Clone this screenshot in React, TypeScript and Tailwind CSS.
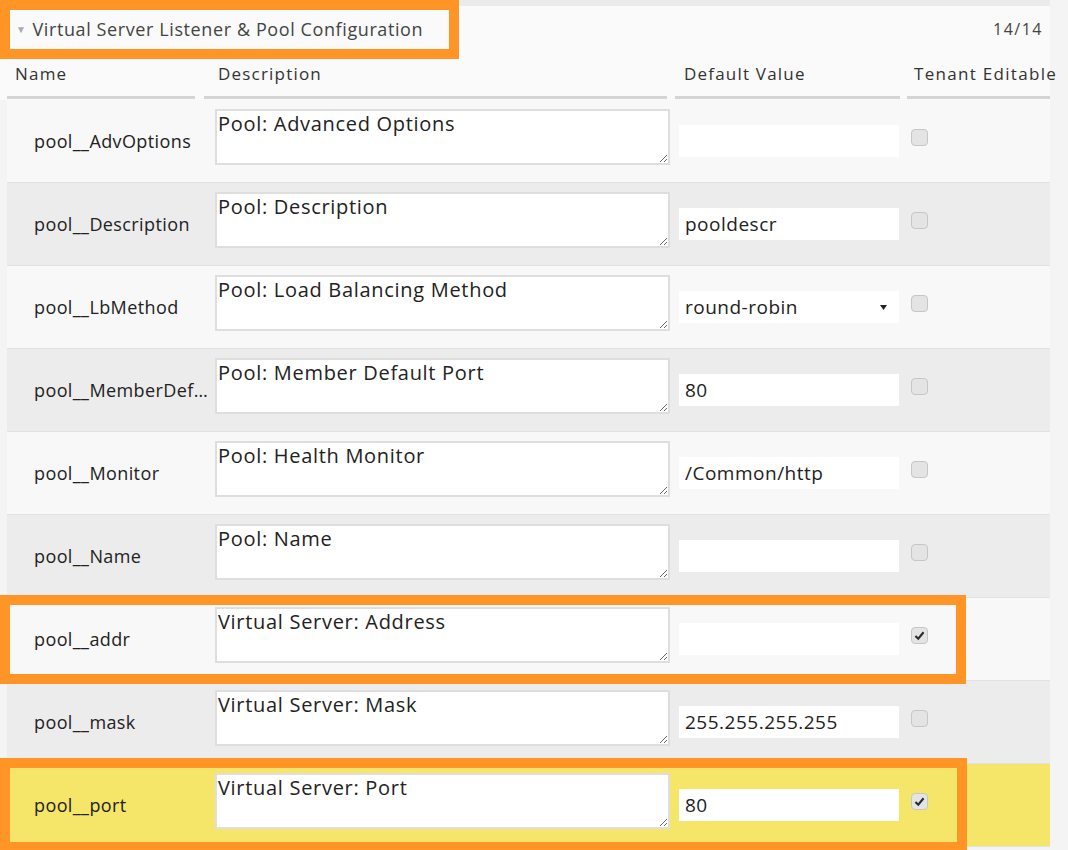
const rows = [
  { id: 1, name: "pool__AdvOptions", desc: "Pool: Advanced Options", value: "", checked: false },
  { id: 2, name: "pool__Description", desc: "Pool: Description", value: "pooldescr", checked: false },
  { id: 3, name: "pool__LbMethod", desc: "Pool: Load Balancing Method", value: "round-robin", checked: false, select: true },
  { id: 4, name: "pool__MemberDefaultPort", desc: "Pool: Member Default Port", value: "80", checked: false },
  { id: 5, name: "pool__Monitor", desc: "Pool: Health Monitor", value: "/Common/http", checked: false },
  { id: 6, name: "pool__Name", desc: "Pool: Name", value: "", checked: false },
  { id: 7, name: "pool__addr", desc: "Virtual Server: Address", value: "", checked: true },
  { id: 8, name: "pool__mask", desc: "Virtual Server: Mask", value: "255.255.255.255", checked: false },
  { id: 9, name: "pool__port", desc: "Virtual Server: Port", value: "80", checked: true, highlight: true },
];

const Checkbox = ({ checked }: { checked: boolean }) => (
  <div className="w-[17px] h-[17px] mb-[7px] rounded-[4px] border border-[#c6c6c6] bg-[#e4e4e4] flex items-center justify-center">
    {checked && (
      <svg width="13" height="13" viewBox="0 0 16 16">
        <path d="M3 8.5 L6.5 12 L13 4" fill="none" stroke="#2a2a2a" strokeWidth="2.6" />
      </svg>
    )}
  </div>
);

const Row = ({ row, index }: { row: (typeof rows)[number]; index: number }) => {
  const bg = row.highlight ? "bg-[#f5e66a]" : index % 2 === 0 ? "bg-[#f8f8f8]" : "bg-[#ececec]";
  return (
    <div className={`flex items-center h-[83px] border-b border-[#e2e2e2] ${bg}`}>
      <div className="w-[208px] pl-[27px] pr-[6px] truncate text-[18px] tracking-[0.4px] text-[#222]">{row.name}</div>
      <textarea
        readOnly
        defaultValue={row.desc}
        className="self-start mt-[9px] w-[455px] h-[56px] border-2 border-[#dedede] bg-white px-[1px] pt-[1px] pb-0 text-[20px] leading-[24px] tracking-[0.7px] text-[#222] outline-none"
      />
      <div className="ml-[9px] w-[220px] h-[32px] bg-white flex items-center justify-between pl-[6px] pr-[12px] text-[19px] tracking-[0.5px] text-[#222]">
        <span>{row.value}</span>
        {row.select && (
          <svg width="7" height="5" viewBox="0 0 7 5">
            <path d="M0 0 H7 L3.5 5 Z" fill="#222" />
          </svg>
        )}
      </div>
      <div className="ml-[12px]">
        <Checkbox checked={row.checked} />
      </div>
    </div>
  );
};

const App = () => (
  <div className="relative w-[1068px] h-[850px] overflow-hidden bg-[#f4f4f4] font-['Open_Sans',sans-serif]">
    <div className="w-[1050px] bg-[#fafafa]">
      <div className="h-[6px] bg-[#ebebeb]" />
      <div className="h-[46px] flex items-center justify-between pl-[16px] pr-[7px]">
        <div className="flex items-center gap-[6px] text-[18px] tracking-[0.6px] text-[#444]">
          <span className="text-[10px] text-[#aaa]">▼</span>
          <span>Virtual Server Listener &amp; Pool Configuration</span>
        </div>
        <span className="text-[16px] tracking-[1.5px] text-[#444]">14/14</span>
      </div>
      <div className="h-[48px] flex items-end pl-[7px] text-[17px] tracking-[1.2px] text-[#333] pb-[1px]">
        <div className="w-[188px] flex flex-col">
          <span className="pl-[8px] leading-[23px]">Name</span>
          <div className="mt-[11px] h-[3px] bg-[#d4d4d4]" />
        </div>
        <div className="ml-[9px] w-[463px] flex flex-col">
          <span className="pl-[14px] leading-[23px]">Description</span>
          <div className="mt-[11px] h-[3px] bg-[#d4d4d4]" />
        </div>
        <div className="ml-[8px] w-[225px] flex flex-col">
          <span className="pl-[9px] leading-[23px]">Default Value</span>
          <div className="mt-[11px] h-[3px] bg-[#d4d4d4]" />
        </div>
        <div className="ml-[7px] w-[143px] flex flex-col">
          <span className="pl-[7px] leading-[23px] whitespace-nowrap tracking-[1.3px]">Tenant Editable</span>
          <div className="mt-[11px] h-[3px] bg-[#d4d4d4]" />
        </div>
      </div>
    </div>
    <div className="ml-[7px] w-[1043px]">
      {rows.map((row, i) => (
        <Row key={row.id} row={row} index={i} />
      ))}
    </div>

    <div className="absolute left-0 top-0 w-[459px] h-[59px] border-[10px] border-[#ff9526] pointer-events-none" />
    <div className="absolute left-0 top-[595px] w-[966px] h-[89px] border-[10px] border-[#ff9526] pointer-events-none" />
    <div className="absolute left-0 top-[758px] w-[967px] h-[94px] border-[10px] border-[#ff9526] pointer-events-none" />
  </div>
);

export default App;
